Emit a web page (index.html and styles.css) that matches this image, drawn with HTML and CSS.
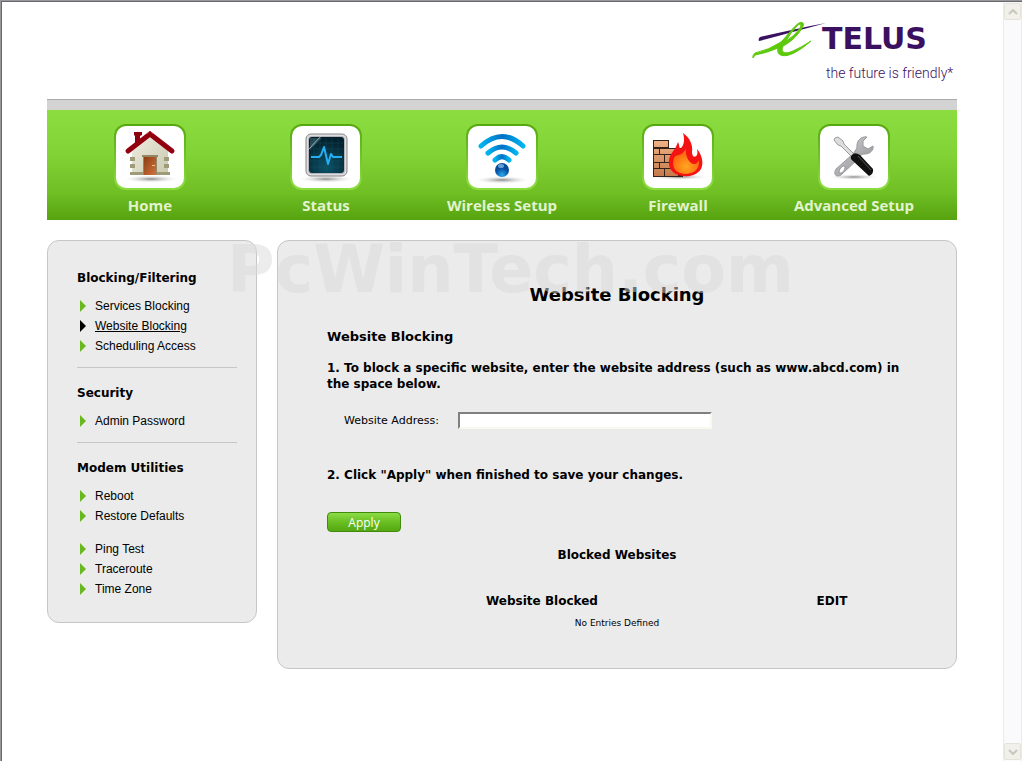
FILE: index.html
```html
<!DOCTYPE html>
<html lang="en">
<head>
    <meta charset="utf-8">
    <title>Website Blocking</title>
    <link rel="stylesheet" href="styles.css">
</head>
<body>
<div class="window">
    <div class="viewport">
        <div class="page">
            <header class="header">
                <svg class="logo" width="206" height="64" viewBox="0 0 206 64" role="img" aria-label="TELUS the future is friendly">
                    <path d="M9 18C30 13 54 8 75 4C54 10 30 16 8 22Q7 20 9 18Z" fill="#3b1060"/>
                    <path d="M4 34Q18 31 30 23C37 16 42 8 48 4C52 2 54 5 51 9C46 18 38 24 32 27C29 35 35 35 42 32Q51 28 60 22Q51 30 43 34C33 39 25 37 27 29Q16 34 4 36L2 39Q1 37 4 34ZM35 22Q44 17 49 9C51 5 49 4 46 7Q40 13 35 22Z" fill="#5dc90c" stroke="#5dc90c" stroke-linejoin="round"/>
                    <text class="logo-name" x="71" y="30">TELUS</text>
                    <text class="logo-tag" x="75" y="59">the future is friendly*</text>
                </svg>
            </header>

            <!-- Top navigation -->
            <nav class="nav">
                <a href="#" class="nav-item">
                    <span class="nav-icon">
                        <svg width="68" height="62" viewBox="0 0 68 62">
                            <defs>
                                <radialGradient id="shadow"><stop offset="0" stop-color="#888"/><stop offset="1" stop-color="#fff" stop-opacity="0"/></radialGradient>
                                <linearGradient id="wall" x2="1" y2="1"><stop offset="0" stop-color="#efeee2"/><stop offset="1" stop-color="#c9c8ae"/></linearGradient>
                                <linearGradient id="door" x2="1" y2="1"><stop offset="0" stop-color="#8f3c12"/><stop offset="1" stop-color="#cf7440"/></linearGradient>
                            </defs>
                            <ellipse cx="35" cy="53" rx="29" ry="4" fill="url(#shadow)"/>
                            <path d="M18 6h8v3l-2 1v9l-5 3V10l-1-1z" fill="#8d0010"/>
                            <path d="M34 9L16 24V49H52V24Z" fill="url(#wall)"/>
                            <path d="M14 31h5v4h-5zM14 38h5v4h-5zM48 31h5v4h-5zM48 38h5v4h-5zM14 46h13v3H14zM41 46h13v3H41z" fill="#9f9b78"/>
                            <path d="M26 29h16v2h-1v18H27V31h-1z" fill="#958764"/>
                            <path d="M28 31h12v18H28z" fill="url(#door)"/>
                            <path d="M36 39h3v1h-3z" fill="#ffc27a"/>
                            <path d="M12 25L34 8L56 25" fill="none" stroke="#92000f" stroke-width="5" stroke-linecap="round" stroke-linejoin="round"/>
                            <path d="M31 8L34 5L37 8" fill="none" stroke="#c03030"/>
                        </svg>
                    </span>
                    Home
                </a>
                <a href="#" class="nav-item">
                    <span class="nav-icon">
                        <svg width="68" height="62" viewBox="0 0 68 62">
                            <defs>
                                <radialGradient id="screen" cy=".85" r=".8"><stop offset="0" stop-color="#0b5266"/><stop offset="1" stop-color="#04202c"/></radialGradient>
                            </defs>
                            <ellipse cx="34" cy="53" rx="29" ry="4" fill="url(#shadow)"/>
                            <rect x="14" y="8" width="41" height="42" rx="5" fill="#dedee2" stroke="#858589"/>
                            <rect x="16" y="10" width="37" height="38" rx="4" fill="#b5b5ba"/>
                            <rect x="17" y="11" width="35" height="36" rx="3" fill="url(#screen)"/>
                            <path d="M22 12v34M28 12v34M34 12v34M40 12v34M46 12v34M18 17h33M18 23h33M18 29h33M18 35h33M18 41h33" stroke="#1c5b6c" stroke-opacity=".3" fill="none"/>
                            <path d="M18 12H30L18 24Z" fill="#6a94a2" opacity=".35"/>
                            <path d="M15 25L30 9" stroke="#d5e2e7" opacity=".7"/>
                            <path d="M19 31h8l2-2 3-8 4 17 3-10 2 3h9" fill="none" stroke="#25aef3" stroke-width="2" stroke-linejoin="round"/>
                        </svg>
                    </span>
                    Status
                </a>
                <a href="#" class="nav-item">
                    <span class="nav-icon">
                        <svg width="68" height="62" viewBox="0 0 68 62">
                            <defs>
                                <linearGradient id="wave"><stop offset="0" stop-color="#00b4f0"/><stop offset=".5" stop-color="#0070c4"/><stop offset="1" stop-color="#00b4f0"/></linearGradient>
                                <radialGradient id="ball" cy=".85"><stop offset="0" stop-color="#28aaf0"/><stop offset="1" stop-color="#064a9c"/></radialGradient>
                            </defs>
                            <ellipse cx="34" cy="54" rx="29" ry="4" fill="url(#shadow)"/>
                            <g fill="none" stroke="url(#wave)" stroke-width="5" stroke-linecap="round">
                                <path d="M13 20Q34 1 55 20"/>
                                <path d="M20 27Q34 15 48 27"/>
                                <path d="M27 34Q34 27 41 34"/>
                            </g>
                            <circle cx="34" cy="44" r="7" fill="url(#ball)"/>
                            <ellipse cx="33" cy="40" rx="3" ry="2" fill="#8fc4ec" opacity=".7"/>
                        </svg>
                    </span>
                    Wireless Setup
                </a>
                <a href="#" class="nav-item">
                    <span class="nav-icon">
                        <svg width="68" height="62" viewBox="0 0 68 62">
                            <defs>
                                <linearGradient id="brick" x2="0" y2="1"><stop offset="0" stop-color="#efb184"/><stop offset="1" stop-color="#c57b4c"/></linearGradient>
                                <radialGradient id="flame" cy=".7"><stop offset="0" stop-color="#ffa820"/><stop offset="1" stop-color="#ff6c12"/></radialGradient>
                            </defs>
                            <ellipse cx="36" cy="51" rx="30" ry="3" fill="url(#shadow)"/>
                            <path d="M9 14h16v8h14v29H9z" fill="#33221b"/>
                            <g fill="url(#brick)">
                                <path d="M10 15h14v6H10zM10 23h5v5h-5zM16 23h15v5H16zM10 29h10v7H10zM21 29h13v7H21zM10 37h5v5h-5zM16 37h13v5H16zM10 43h10v7H10zM21 43h13v7H21z"/>
                            </g>
                            <path d="M39 7C46 12 49 19 48 26C48 31 51 32 53 29C54 27 53 24 53 23C58 29 60 37 57 43C53 49 46 51 39 50C29 49 24 43 25 34C26 27 31 25 34 16C36 20 35 24 37 22C40 19 41 14 39 7Z" fill="#f41212"/>
                            <path d="M42 23C41 31 46 38 50 38C53 38 54 36 55 34C56 43 50 48 41 48C32 47 27 42 30 32C33 27 36 32 42 23Z" fill="url(#flame)"/>
                        </svg>
                    </span>
                    Firewall
                </a>
                <a href="#" class="nav-item">
                    <span class="nav-icon">
                        <svg width="68" height="62" viewBox="0 0 68 62">
                            <defs>
                                <linearGradient id="steel" x2="1" y2="1"><stop offset="0" stop-color="#d8d8da"/><stop offset="1" stop-color="#88888c"/></linearGradient>
                            </defs>
                            <ellipse cx="34" cy="51" rx="26" ry="3" fill="url(#shadow)"/>
                            <path d="M47 11C41 10 36 15 37 22L33 28L16 43C13 48 16 52 21 49L37 34C40 29 42 28 45 28C50 28 54 24 53 20L48 23L43 20L43 15Z" fill="url(#steel)" stroke="#9a9a9e"/>
                            <path d="M19 46C19 42 25 37 25 42C25 45 20 49 19 46Z" fill="#fff" stroke="#929296"/>
                            <path d="M15 12L18 11L23 15L24 18L35 29L32 31L21 20L18 19L14 14Z" fill="#ddd" stroke="#9b9b9d"/>
                            <path d="M31 30Q34 25 40 29L53 43Q54 48 49 50L33 35Q30 33 31 30Z" fill="#111"/>
                            <path d="M38 30L51 44" stroke="#555" stroke-width="1"/>
                        </svg>
                    </span>
                    Advanced Setup
                </a>
            </nav>

            <div class="columns">
                <!-- Side menu -->
                <aside class="sidebar">
                    <section class="menu">
                        <h3>Blocking/Filtering</h3>
                        <ul>
                            <li><a href="#">Services Blocking</a></li>
                            <li class="active"><a href="#">Website Blocking</a></li>
                            <li><a href="#">Scheduling Access</a></li>
                        </ul>
                    </section>
                    <section class="menu">
                        <h3>Security</h3>
                        <ul>
                            <li><a href="#">Admin Password</a></li>
                        </ul>
                    </section>
                    <section class="menu">
                        <h3>Modem Utilities</h3>
                        <ul>
                            <li><a href="#">Reboot</a></li>
                            <li><a href="#">Restore Defaults</a></li>
                        </ul>
                        <ul>
                            <li><a href="#">Ping Test</a></li>
                            <li><a href="#">Traceroute</a></li>
                            <li><a href="#">Time Zone</a></li>
                        </ul>
                    </section>
                </aside>

                <main class="content">
                    <h1>Website Blocking</h1>
                    <form>
                        <h2>Website Blocking</h2>
                        <p class="step">1. To block a specific website, enter the website address (such as www.abcd.com) in the space below.</p>
                        <div class="form-row">
                            <label for="address">Website Address:</label>
                            <input type="text" id="address" name="address">
                        </div>
                        <p class="step">2. Click "Apply" when finished to save your changes.</p>
                        <button type="submit" class="btn">Apply</button>
                    </form>

                    <!-- Blocked websites -->
                    <table>
                        <caption>Blocked Websites</caption>
                        <thead>
                            <tr>
                                <th>Website Blocked</th>
                                <th class="edit-col">EDIT</th>
                            </tr>
                        </thead>
                        <tbody>
                            <tr>
                                <td colspan="2">No Entries Defined</td>
                            </tr>
                        </tbody>
                    </table>
                </main>
                <div class="watermark">PcWinTech.com</div>
            </div>
        </div>
    </div>

    <div class="scrollbar">
        <button type="button" class="scroll-btn" aria-label="Scroll up">
            <svg width="10" height="6" viewBox="0 0 10 6"><path d="M1 5L5 1L9 5" fill="none" stroke="#c9c8bd" stroke-width="2"/></svg>
        </button>
        <button type="button" class="scroll-btn" aria-label="Scroll down">
            <svg width="10" height="6" viewBox="0 0 10 6"><path d="M1 1L5 5L9 1" fill="none" stroke="#c9c8bd" stroke-width="2"/></svg>
        </button>
    </div>
</div>
</body>
</html>
```
FILE: styles.css
```css
* {
    box-sizing: border-box;
}
body {
    margin: 0;
    border-top: 1px solid #97979c;
    border-left: 1px solid #97979c;
    background: white;
    color: black;
    font-family: Verdana, "DejaVu Sans", sans-serif;
    font-size: 13px;
    line-height: 16px;
}
.window {
    display: flex;
    min-height: calc(100vh - 1px);
    border-top: 1px solid #69696b;
    border-left: 1px solid #69696b;
}
.viewport {
    flex: 1;
    padding: 0 46px 0 45px;
}
.page {
    max-width: 910px;
    margin: 0 auto;
}
.header {
    display: flex;
    justify-content: flex-end;
    padding: 17px 0 16px;
    border-bottom: 1px solid #aaa;
}
.logo {
    display: block;
    overflow: visible;
}
.logo-name {
    font: bold 30px "DejaVu Sans", sans-serif;
    fill: #3b1060;
}
.logo-tag {
    font: 300 14px Roboto, sans-serif;
    fill: #3b1060;
}

/* top navigation */
.nav {
    display: flex;
    padding: 14px 15px 5px;
    border-top: 10px solid #d3d3d3;
    background: linear-gradient(#8cde40, #82d336 40%, #70bf25 75%, #56a30f);
}
.nav-item {
    flex: 1;
    display: flex;
    flex-direction: column;
    align-items: center;
    gap: 5px;
    color: #e2f3d0;
    font: bold 15px/20px "Open Sans", sans-serif;
    text-decoration: none;
}
.nav-icon {
    padding: 2px;
    border-radius: 12px;
    background: linear-gradient(#56a80f, #8cde40);
}
.nav-icon svg {
    display: block;
    border-radius: 10px;
    background: white;
}

/* panels */
.columns {
    display: flex;
    align-items: flex-start;
    gap: 20px;
    position: relative;
    margin: 20px 0;
}
.sidebar, .content {
    border: 1px solid #c6c6c6;
    border-radius: 12px;
    background: #ebebeb;
}
.sidebar {
    width: 210px;
    padding: 29px 19px 23px 29px;
}
.menu + .menu {
    margin-top: 11px;
    padding-top: 17px;
    border-top: 1px solid #c6c6c6;
}
.menu h3 {
    margin: 0 0 10px;
    font-size: 12px;
    line-height: 16px;
}
.menu ul {
    margin: 0;
    padding: 0;
    list-style: none;
}
.menu ul + ul {
    margin-top: 13px;
}
.menu li {
    display: flex;
    align-items: center;
    gap: 9px;
    padding-left: 3px;
    font: 12px/20px Arial, "Liberation Sans", sans-serif;
}
.menu li::before {
    content: "";
    border: solid transparent;
    border-width: 6px 0 6px 6px;
    border-left-color: #68b81f;
}
.menu li.active::before {
    border-left-color: black;
}
.menu a {
    color: black;
    text-decoration: none;
}
.menu .active a {
    text-decoration: underline;
}
.content {
    flex: 1;
    padding: 43px 49px 37px;
}
.content h1 {
    margin: 0 0 23px;
    font-size: 18px;
    line-height: 22px;
    text-align: center;
}
.content h2 {
    margin: 0 0 15px;
    font-size: 13px;
    line-height: 16px;
}
.step {
    margin: 0;
    font-size: 12px;
    font-weight: bold;
}
.form-row {
    display: flex;
    align-items: center;
    gap: 19px;
    margin: 20px 0 38px;
    padding-left: 17px;
}
.form-row label {
    font-size: 11px;
}
.form-row input {
    width: 254px;
    height: 17px;
    padding: 0 2px;
    border: 2px solid;
    border-color: #808080 #f8f8ee #f8f8ee #808080;
    background: white;
    font: inherit;
}
.btn {
    display: block;
    width: 74px;
    height: 20px;
    margin-top: 29px;
    padding: 0;
    border: 1px solid #418a0d;
    border-radius: 4px;
    background: linear-gradient(#8bdc46, #69bf22 50%, #55a811);
    color: white;
    font: 12px "Open Sans", sans-serif;
}
table {
    width: 100%;
    margin-top: 15px;
    border-collapse: collapse;
    font-size: 12px;
}
caption {
    margin-bottom: 30px;
    font-weight: bold;
}
th, td {
    padding: 0;
    text-align: center;
}
.edit-col {
    width: 150px;
}
td {
    padding-top: 6px;
    font-size: 9px;
}

/* site mark over both panels */
.watermark {
    position: absolute;
    top: 0;
    left: 180px;
    color: rgba(217, 217, 217, 0.5);
    font-size: 65px;
    font-weight: bold;
    line-height: 60px;
    pointer-events: none;
}

/* window scrollbar */
.scrollbar {
    display: flex;
    flex-direction: column;
    justify-content: space-between;
    align-items: center;
    width: 19px;
    padding: 1px 0;
    border-left: 1px solid #ebebef;
    border-right: 1px solid #ebebef;
    background: #fafafd;
}
.scroll-btn {
    display: flex;
    align-items: center;
    justify-content: center;
    width: 17px;
    height: 17px;
    padding: 0;
    border: 1px solid #e4e3d8;
    border-radius: 2px;
    background: #f1f0ea;
}
```
